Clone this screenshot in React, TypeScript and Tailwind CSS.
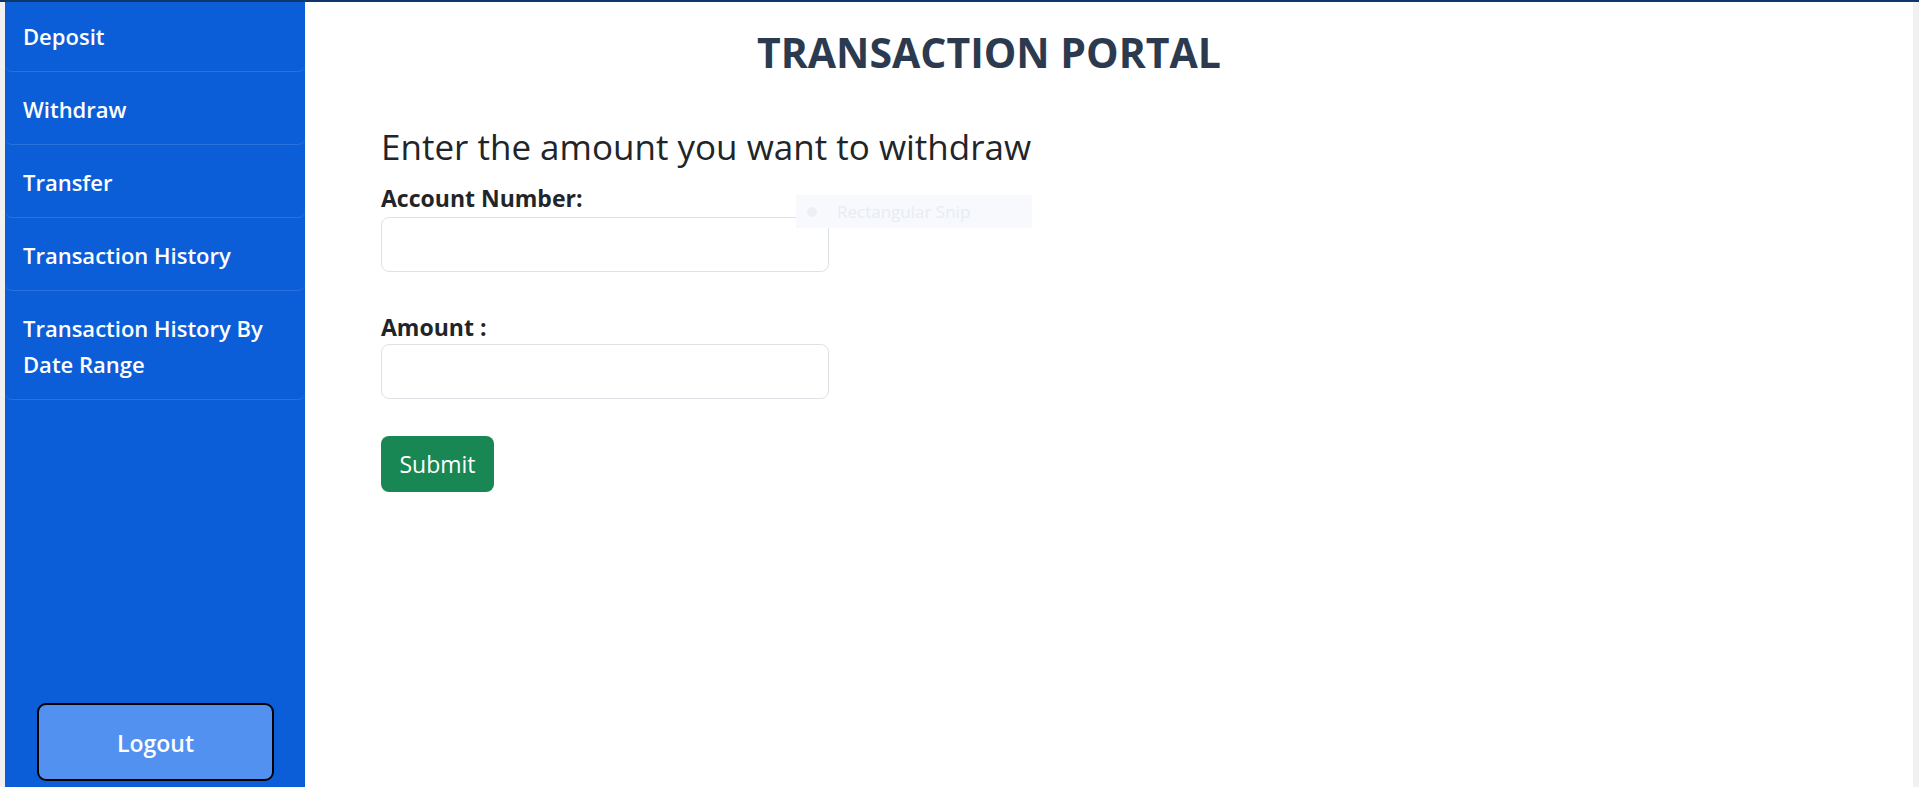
import { useState } from 'react'

const menu = ['Deposit', 'Withdraw', 'Transfer', 'Transaction History', 'Transaction History By Date Range']

function Sidebar() {
  return (
    <aside className="w-[300px] shrink-0 bg-[#0b5ed7] flex flex-col text-white">
      <ul>
        {menu.map((m, i) => (
          <li
            key={m}
            className={`pl-[18px] pr-4 pb-[17px] ${i === 0 ? 'pt-[16px]' : 'pt-[19px]'} border-b border-[#2a71de] rounded-b-[7px] text-[22px] leading-[36px] font-semibold cursor-pointer`}
          >
            {m}
          </li>
        ))}
      </ul>
      <button className="mt-auto mb-[6px] ml-[32px] w-[237px] h-[78px] pt-[2px] rounded-[9px] border-2 border-black bg-[#5391f1] text-[23px] font-semibold text-white">
        Logout
      </button>
    </aside>
  )
}

export default function App() {
  const [account, setAccount] = useState('')
  const [amount, setAmount] = useState('')

  return (
    <div className="h-screen flex flex-col bg-white text-[#212529] font-['Open_Sans',sans-serif]">
      <div className="h-[2px] bg-[#0c3768] shrink-0" />
      <div className="flex flex-1 min-h-0">
        <div className="w-[5px] shrink-0 bg-[#f1f1f1]" />
        <Sidebar />
        <main className="relative flex-1 pl-[76px] pt-[25px]">
          <h1 className="w-[1216px] text-center text-[41px] leading-[50px] font-bold text-[#2b3a4f]">
            TRANSACTION PORTAL
          </h1>
          <h2 className="mt-[48px] text-[35px] leading-[44px] font-normal">
            Enter the amount you want to withdraw
          </h2>
          <form onSubmit={(e) => e.preventDefault()}>
            <label className="block mt-[15px] text-[23px] leading-[28px] font-bold">Account Number:</label>
            <input
              value={account}
              onChange={(e) => setAccount(e.target.value)}
              className="mt-[5px] w-[448px] h-[55px] rounded-[8px] border border-[#dee2e6] px-3 outline-none"
            />
            <label className="block mt-[41px] text-[23px] leading-[28px] font-bold">Amount :</label>
            <input
              value={amount}
              onChange={(e) => setAmount(e.target.value)}
              className="mt-[3px] w-[448px] h-[55px] rounded-[8px] border border-[#dee2e6] px-3 outline-none"
            />
            <div>
              <button className="mt-[37px] w-[113px] h-[56px] rounded-[8px] bg-[#198754] text-white text-[23px]">
                Submit
              </button>
            </div>
          </form>

          {/* faint snipping-tool hint left over in the screenshot */}
          <div className="absolute left-[491px] top-[193px] w-[236px] h-[33px] bg-[#f7f9fd] flex items-center gap-[20px] pl-[11px] pointer-events-none">
            <span className="w-[10px] h-[10px] rounded-full bg-[#eceff3]" />
            <span className="text-[17px] text-[#e8ecf2]">Rectangular Snip</span>
          </div>
        </main>
        <div className="w-[6px] shrink-0 bg-[#f1f1f1]" />
      </div>
    </div>
  )
}
